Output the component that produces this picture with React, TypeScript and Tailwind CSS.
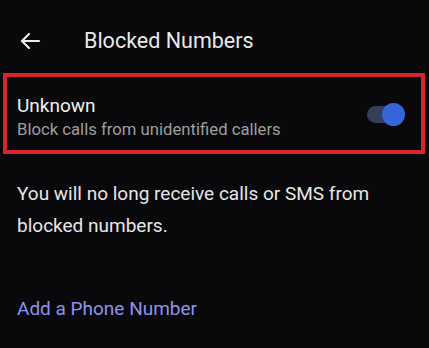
import React from "react";

export default function App() {
  return (
    <div
      className="w-[429px] h-[348px] bg-[#09090b] overflow-hidden"
      style={{ fontFamily: "Roboto, 'Noto Sans', sans-serif" }}
    >
      <div className="h-[73px] pt-[9px] flex items-center">
        <svg
          width="22"
          height="18"
          viewBox="0 0 22 18"
          className="ml-[19px]"
          fill="none"
          stroke="#ececec"
          strokeWidth="2.2"
          strokeLinecap="round"
          strokeLinejoin="round"
        >
          <path d="M20 9H3" />
          <path d="M10 2L3 9l7 7" />
        </svg>
        <div className="ml-[43px] text-[21.5px] text-[#e8e8e8] leading-none">Blocked Numbers</div>
      </div>
      <div className="ml-[3px] mr-[4px] h-[81px] border-[4px] border-[#d8252c] flex items-start justify-between pl-[10px] pr-[16px] pt-[17px]">
        <div>
          <div className="text-[19px] leading-[24px] text-[#f0f0f0]">Unknown</div>
          <div className="text-[16.7px] leading-[23px] text-[#9e9e9e]">Block calls from unidentified callers</div>
        </div>
        <div className="relative w-[38px] h-[23px] mt-[9px]">
          <div className="absolute left-0 top-[3px] w-[34px] h-[17px] rounded-full bg-[#363d58]" />
          <div className="absolute right-0 top-0 w-[23px] h-[23px] rounded-full bg-[#3565d8]" />
        </div>
      </div>
      <div className="mt-[24px] pl-[17px] pr-[17px] text-[19px] leading-[32px] text-[#e6e6e6]">
        You will no long receive calls or SMS from blocked numbers.
      </div>
      <div className="mt-[55px] pl-[17px] text-[19px] leading-[24px] text-[#8e92ee]">Add a Phone Number</div>
    </div>
  );
}
